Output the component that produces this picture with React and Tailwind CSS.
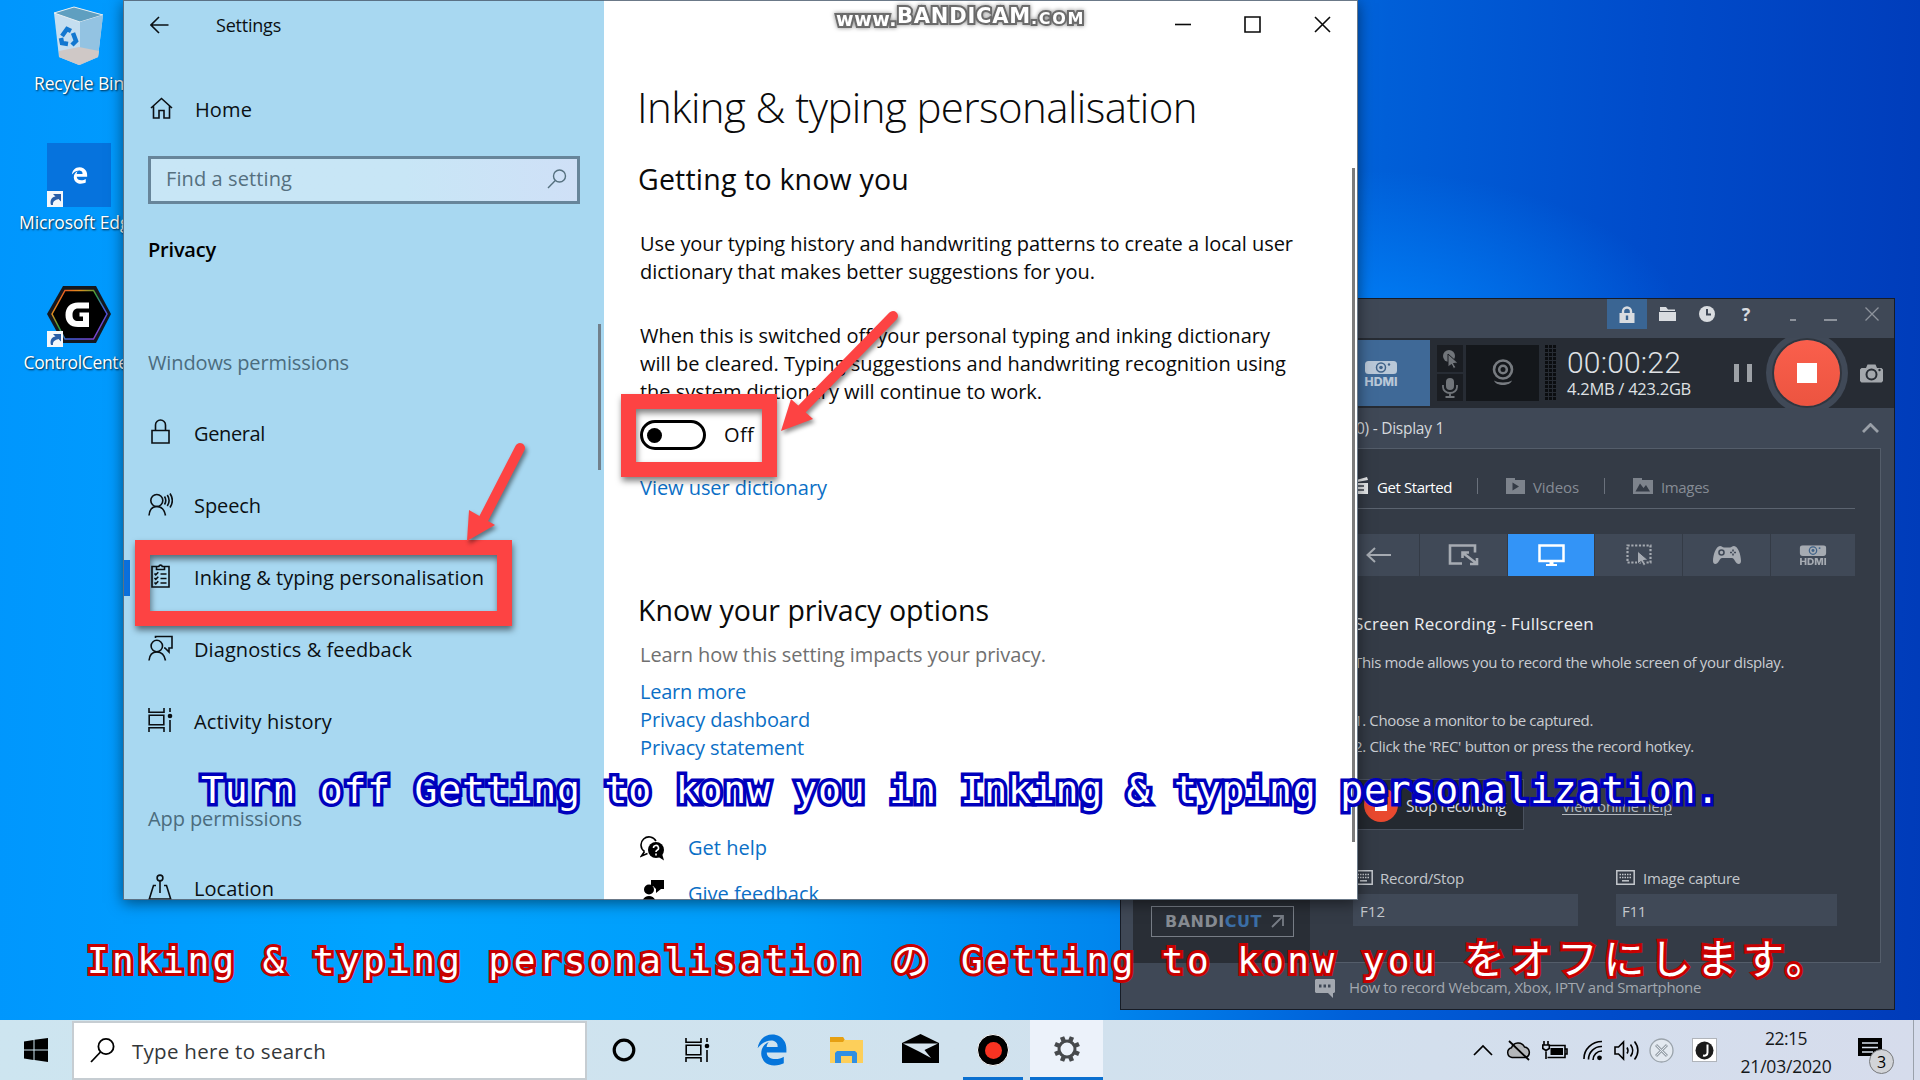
import React, { useLayoutEffect, useRef } from "react";
import { FaEdgeLegacy } from "react-icons/fa6";

/* Single line of text whose tracking is adjusted so that it spans w pixels. */
function Fit({ w, className = "", children }) {
  const ref = useRef(null);
  useLayoutEffect(() => {
    const el = ref.current;
    el.style.letterSpacing = "0px";
    const natural = el.getBoundingClientRect().width;
    el.style.letterSpacing = `${(w - natural) / el.textContent.length}px`;
  }, [w, children]);
  return (
    <span ref={ref} className={`inline-block shrink-0 self-auto whitespace-pre ${className}`}>
      {children}
    </span>
  );
}

function Svg({ w, h, className = "", sw = 1.6, children, vb }) {
  return (
    <svg
      width={w}
      height={h}
      viewBox={vb || `0 0 ${w} ${h}`}
      fill="none"
      stroke="currentColor"
      strokeWidth={sw}
      className={`shrink-0 ${className}`}
    >
      {children}
    </svg>
  );
}

const TaskViewShape = () => (
  <>
    <path d="M1 0v4.2h15V0M1 24v-4.2h15V24M1.2 7.2h14.6v9.6H1.2zM22 0v4M22 12v12" />
    <circle cx="22" cy="8" r="2.3" fill="currentColor" stroke="none" />
  </>
);

const icons = {
  general: (
    <Svg w={25} h={26}>
      <path d="M4 11.5h17v12.500H4zM7.500 11.500V6a5 5 0 0 1 10 0v5.500" />
    </Svg>
  ),
  speech: (
    <Svg w={25} h={25}>
      <circle cx="8.800" cy="8.500" r="6" />
      <path d="M1 23.500c.5-5.500 3.500-9 7.800-9s7.700 3.500 8.700 9M16.500 4.500c1.600 2.500 1.600 5.500 0 8M19.300 3c2.300 3.500 2.300 7.500 0 11M22 1.500c3 4.500 3 9.500 0 14" />
    </Svg>
  ),
  inking: (
    <Svg w={25} h={26}>
      <path d="M8.500 3.500H4V24h17V3.500h-4.500M8.500 6.500v-3h2.300a1.800 1.800 0 0 1 3.500 0h2.200v3zM12.500 11h6M12.500 15.500h6M12.500 20h6M6.500 10.500l1.300 1.300 2.500-2.500M6.500 15l1.300 1.300 2.500-2.500M6.500 19.500l1.300 1.300 2.500-2.500" />
    </Svg>
  ),
  diagnostics: (
    <Svg w={25} h={26}>
      <circle cx="8.800" cy="11" r="5.700" />
      <path d="M1 25.500c.5-5.500 3.500-8.500 7.800-8.500s7.700 3 8.700 8.500M7.500 3V1.500h16.500V13h-3v4l-4-4h-1" />
    </Svg>
  ),
  activity: (
    <Svg w={25} h={24}>
      <TaskViewShape />
    </Svg>
  ),
  location: (
    <Svg w={25} h={26}>
      <circle cx="12" cy="4" r="2.900" />
      <path d="M12 7v12M8 11.500H5.500L1.300 25h21.400L18.500 11.500H16" />
    </Svg>
  ),
};

function NavItem({ icon, label, w, selected }) {
  return (
    <div className="flex h-[72px] shrink-0 items-center">
      <span className={selected ? "h-9 w-1.5 bg-[#0a6fdc]" : "h-9 w-1.5"} />
      <span className="mb-1 ml-[18px] w-[25px]">{icons[icon]}</span>
      <Fit w={w} className="ml-[21px] text-[20px]">
        {label}
      </Fit>
    </div>
  );
}

function Sidebar() {
  return (
    <div className="flex h-full w-[481px] shrink-0 flex-col overflow-hidden bg-[#a8d8f1] pl-px text-[#0b1014]">
      <div className="flex h-[50px] shrink-0 items-center pl-[26px]">
        <Svg w={19} h={18}>
          <path d="M9 1L1 9l8 8M1 9h17.500" />
        </Svg>
        <Fit w={65} className="ml-[47px] text-[18px]">
          Settings
        </Fit>
      </div>
      <div className="mt-10 flex h-10 shrink-0 items-center pl-[26px]">
        <Svg w={23} h={22} className="mb-1">
          <path d="M1 11L11.500 1.500 22 11M3.500 9v12h5.500v-7.500h5V21h5.500V9" />
        </Svg>
        <Fit w={57} className="ml-[22px] text-[20px]">
          Home
        </Fit>
      </div>
      <div className="mt-[26px] ml-6 flex h-[48px] w-[432px] shrink-0 items-center justify-between border-3 border-[#67859a] bg-gradient-to-r from-[#c8e6f6] from-60% to-[#cfe0f7] pr-2.5 pb-[2px] pl-[15px] text-[#55707f]">
        <Fit w={126} className="text-[20px]">
          Find a setting
        </Fit>
        <Svg w={20} h={20} sw={1.4}>
          <circle cx="12.500" cy="7" r="6" />
          <path d="M8.300 11.500L1 19" />
        </Svg>
      </div>
      <div className="mt-[31px] flex h-[30px] shrink-0 items-center pl-6">
        <Fit w={68} className="text-[20px] font-semibold text-black">
          Privacy
        </Fit>
      </div>
      <div className="mt-[83px] flex h-[30px] shrink-0 items-center pl-6">
        <Fit w={201} className="text-[20px] text-[#4b6c7e]">
          Windows permissions
        </Fit>
      </div>
      <div className="mt-5 flex shrink-0 flex-col">
        <NavItem icon="general" label="General" w={71} />
        <NavItem icon="speech" label="Speech" w={67} />
        <NavItem icon="inking" label="Inking & typing personalisation" w={290} selected />
        <NavItem icon="diagnostics" label="Diagnostics & feedback" w={218} />
        <NavItem icon="activity" label="Activity history" w={138} />
      </div>
      <div className="mt-[46px] flex h-[30px] shrink-0 items-center pl-6">
        <Fit w={154} className="text-[20px] text-[#4b6c7e]">
          App permissions
        </Fit>
      </div>
      <div className="mt-[19px]">
        <NavItem icon="location" label="Location" w={80} />
      </div>
    </div>
  );
}

function Line({ w, className = "", children }) {
  return (
    <div className="flex h-7 shrink-0 items-center">
      <Fit w={w} className={`text-[20px] ${className}`}>
        {children}
      </Fit>
    </div>
  );
}

function SettingsContent() {
  return (
    <div className="flex h-full flex-1 flex-col overflow-hidden bg-white pl-9 text-[#0a0a0a]">
      <div className="flex h-[49px] shrink-0 items-center justify-end gap-[53px] pr-[27px]">
        <Svg w={16} h={17}>
          <path d="M0 8.500h16" />
        </Svg>
        <Svg w={17} h={17}>
          <path d="M1 1h15v15H1z" />
        </Svg>
        <Svg w={17} h={17}>
          <path d="M1 1l15 15M16 1L1 16" />
        </Svg>
      </div>
      <div className="mt-[27px] -ml-[3px] flex h-[60px] shrink-0 items-center">
        <Fit w={560} className="text-[42px] font-[350]">
          Inking & typing personalisation
        </Fit>
      </div>
      <div className="mt-[23px] -ml-0.5 flex h-10 shrink-0 items-center">
        <Fit w={271} className="text-[28.5px]">
          Getting to know you
        </Fit>
      </div>
      <div className="mt-[31px]">
        <Line w={653}>Use your typing history and handwriting patterns to create a local user</Line>
        <Line w={455}>dictionary that makes better suggestions for you.</Line>
      </div>
      <div className="mt-[36px]">
        <Line w={630}>When this is switched off your personal typing and inking dictionary</Line>
        <Line w={646}>will be cleared. Typing suggestions and handwriting recognition using</Line>
        <Line w={402}>the system dictionary will continue to work.</Line>
      </div>
      <div className="mt-[14px] flex h-[30px] shrink-0 items-center">
        <span className="flex h-[30px] w-[66px] items-center rounded-full border-3 border-black pl-1">
          <span className="size-[15px] rounded-full bg-black" />
        </span>
        <Fit w={30} className="ml-[18px] text-[20px]">
          Off
        </Fit>
      </div>
      <div className="mt-[24px] text-[#0b6fc6]">
        <Line w={187}>View user dictionary</Line>
      </div>
      <div className="mt-[88px] -ml-0.5 flex h-10 shrink-0 items-center">
        <Fit w={351} className="text-[28.5px]">
          Know your privacy options
        </Fit>
      </div>
      <div className="mt-[11px] text-[#707070]">
        <Line w={406}>Learn how this setting impacts your privacy.</Line>
      </div>
      <div className="mt-[9px] text-[#0b6fc6]">
        <Line w={106}>Learn more</Line>
        <Line w={170}>Privacy dashboard</Line>
        <Line w={164}>Privacy statement</Line>
      </div>
      <div className="mt-[72px] flex items-center gap-[23px] text-[#0b6fc6]">
        <Svg w={25} h={25} className="text-black">
          <path d="M4.500 15.500A8 8 0 1 1 16 5M4.500 15.500L1.500 20l6-2.500" />
          <circle cx="16" cy="14" r="8" fill="currentColor" stroke="none" />
          <path d="M17 20l7 4.500-2-7z" fill="currentColor" stroke="none" />
          <path d="M13.500 12a2.500 2.500 0 1 1 3.500 2.200c-.8.400-1 .8-1 1.800M16 17.500v2" stroke="#fff" />
        </Svg>
        <Line w={79}>Get help</Line>
      </div>
      <div className="mt-[18px] flex items-center gap-6 text-[#0b6fc6]">
        <Svg w={24} h={28} className="text-black">
          <circle cx="9" cy="9.500" r="5" fill="currentColor" stroke="none" />
          <path d="M2 24c0-5 3-8 7-8s7 3 7 8zM11 0h13v9h-3l-5 4V9l-3-3h-2z" fill="currentColor" stroke="none" />
        </Svg>
        <Line w={131}>Give feedback</Line>
      </div>
    </div>
  );
}

function SettingsWindow() {
  return (
    <div className="absolute top-0 left-[123px] h-[900px] w-[1235px] shadow-[0_3px_14px_rgba(0,0,0,0.5)]">
      <div className="flex h-full">
        <Sidebar />
        <SettingsContent />
      </div>
      <div className="absolute top-0 left-0 h-full w-full border border-[#46586a]/80" />
      <div className="absolute top-[324px] left-[475px] h-[146px] w-[3px] bg-[#71808c]" />
      <div className="absolute top-[168px] left-[1229px] h-[674px] w-[3px] bg-[#7c7c7c]" />
      <div className="absolute top-[3px] left-[713px] flex h-7 items-center font-['DejaVu_Sans',sans-serif] [paint-order:stroke_fill] [-webkit-text-stroke:4px_#6b6b6b] [filter:drop-shadow(0_0_2px_rgba(90,90,90,0.7))]">
        <Fit w={61} className="pt-1 text-[19px] font-bold text-white">
          www.
        </Fit>
        <Fit w={134} className="text-[21px] font-bold text-white">
          BANDICAM
        </Fit>
        <Fit w={54} className="pt-1 text-[16px] font-bold text-white">
          .COM
        </Fit>
      </div>
    </div>
  );
}

function HdmiIcon() {
  return (
    <Svg w={34} h={25}>
      <rect x="1" y="0" width="32" height="13" rx="3.500" fill="currentColor" stroke="none" />
      <circle cx="17" cy="6.500" r="4.500" stroke="#3f6288" strokeWidth="1.500" />
      <circle cx="17" cy="6.500" r="1.800" fill="#3f6288" stroke="none" />
      <circle cx="25" cy="3.500" r="1.200" fill="#3f6288" stroke="none" />
      <text x="0.500" y="24.500" textLength="33" lengthAdjust="spacingAndGlyphs" fill="currentColor" stroke="none" fontSize="11.500" fontWeight="800" fontFamily="Inter, sans-serif">
        HDMI
      </text>
    </Svg>
  );
}

function KeyboardIcon() {
  return (
    <Svg w={19} h={15} sw={1.5} className="text-[#c3c7cc]">
      <path d="M.8.800h17.400v13.400H.8z" />
      <path d="M3.500 4.500h12M3.500 7.500h12" strokeDasharray="1.500 1" />
      <path d="M6 10.800h7" />
    </Svg>
  );
}

function ModeCell({ active, className = "w-[87px]", children }) {
  return (
    <div
      className={`flex h-full items-center justify-center ${active ? "bg-[#3394f7] text-white" : "bg-[#404957] text-[#a6abb2]"} ${className}`}
    >
      {children}
    </div>
  );
}

function RecorderTitleBar() {
  return (
    <div className="flex h-[39px] shrink-0 items-start text-[#d9dce0]">
      <div className="ml-[486px] flex h-[30px] w-10 items-center justify-center bg-[#3a6593]">
        <Svg w={16} h={17} sw={2.4}>
          <path d="M4 8V5.500a4 4 0 0 1 8 0V8" />
          <path d="M.5 7h15v10H.5z" fill="currentColor" stroke="none" />
          <path d="M8 9.500v4.500" stroke="#3a6593" />
        </Svg>
      </div>
      <div className="flex h-[30px] w-10 items-center justify-center">
        <Svg w={17} h={14}>
          <path d="M1 0h6l2 2.500h7V4H1zM0 5h17v9H0z" fill="currentColor" stroke="none" />
        </Svg>
      </div>
      <div className="flex h-[30px] w-10 items-center justify-center">
        <Svg w={16} h={16} sw={2}>
          <circle cx="8" cy="8" r="8" fill="currentColor" stroke="none" />
          <path d="M8 3v5.500h4" stroke="#3f4856" />
        </Svg>
      </div>
      <div className="flex h-[30px] w-[38px] items-center justify-center text-[18px] font-bold">?</div>
      <div className="mt-5 ml-[25px] h-0.5 w-1.5 bg-[#8d939c]" />
      <div className="mt-[20px] ml-7 h-0.5 w-[13px] bg-[#8d939c]" />
      <Svg w={14} h={14} sw={1.300} className="mt-2 ml-7 text-[#8d939c]">
        <path d="M.5.500l13 13M13.500.500l-13 13" />
      </Svg>
    </div>
  );
}

function RecorderControls() {
  return (
    <div className="flex h-[70px] shrink-0 items-center overflow-hidden bg-[#272c34]">
      <div className="ml-[200px] flex h-[66px] w-[109px] items-center justify-end bg-[#3f6997] pr-[32px] text-[#b9c8d8]">
        <HdmiIcon />
      </div>
      <div className="ml-[7px] flex flex-col gap-0.5 text-[#71757a]">
        <div className="flex h-[27px] w-[26px] items-center justify-center bg-[#1a1d22]">
          <Svg w={18} h={20} sw={2}>
            <circle cx="8" cy="7" r="6" fill="currentColor" stroke="none" />
            <path d="M7 5l10 9-4.500.5 2.500 4-2.500 1-2-4L7 18z" fill="currentColor" stroke="#1a1d22" strokeWidth="1" />
          </Svg>
        </div>
        <div className="flex h-[27px] w-[26px] items-center justify-center bg-[#1a1d22]">
          <Svg w={16} h={20} sw={1.800}>
            <rect x="4" y="0" width="8" height="12" rx="4" fill="currentColor" stroke="none" />
            <path d="M1 7v2a7 6 0 0 0 14 0V7M8 15v4M3.500 19h9" />
          </Svg>
        </div>
      </div>
      <div className="ml-[3px] flex h-14 w-[73px] items-center justify-center bg-[#14171b] text-[#777b80]">
        <Svg w={22} h={28} sw={2.600}>
          <circle cx="11" cy="10.500" r="9" />
          <circle cx="11" cy="10.500" r="3.800" />
          <path d="M2 21.500c2 6 16 6 18 0-3 2.500-15 2.500-18 0z" fill="currentColor" stroke="none" />
        </Svg>
      </div>
      <Svg w={11} h={56} sw={2} className="ml-[6px] text-[#0b0d10]">
        <path d="M1.500 0v56M5.500 0v56M9.500 0v56" strokeWidth="3" strokeDasharray="3 1" />
      </Svg>
      <div className="ml-[11px] flex flex-col items-start pt-[3px] text-[#dfe1e4]">
        <Fit w={114} className="h-[26px] font-[Roboto,sans-serif] text-[30px] leading-[26px] font-light">
          00:00:22
        </Fit>
        <Fit w={124} className="mt-0.5 h-[22px] text-[16.5px] leading-[22px]">
          4.2MB / 423.2GB
        </Fit>
      </div>
      <div className="ml-[43px] flex gap-2">
        <span className="h-[18px] w-[5px] bg-[#9da1a6]" />
        <span className="h-[18px] w-[5px] bg-[#9da1a6]" />
      </div>
      <div className="ml-[14px] flex size-[82px] shrink-0 items-center justify-center rounded-full bg-[#404957]">
        <div className="flex size-[66px] items-center justify-center rounded-full bg-gradient-to-b from-[#fa5f4c] to-[#ec5440] shadow-[0_0_0_2px_#30363f]">
          <span className="size-5 bg-white" />
        </div>
      </div>
      <Svg w={23} h={19} className="ml-3 text-[#a3a7ac]">
        <path d="M1.500 4H6l1.500-3.500h8L17 4h4.500L23 5.500V17l-1.500 1.500h-20L0 17V5.500z" fill="currentColor" stroke="none" />
        <circle cx="11.500" cy="10.500" r="5" stroke="#272c34" strokeWidth="2" />
        <circle cx="19.500" cy="6" r="1.200" fill="#272c34" stroke="none" />
      </Svg>
    </div>
  );
}

function RecorderPanel() {
  return (
    <div className="flex h-[515px] w-[571px] shrink-0 flex-col border border-l-0 border-[#545d6a] bg-[#343b46]">
      <div className="mt-[29px] ml-[41px] flex h-4 items-center">
        <Svg w={17} h={18} className="text-[#e8eaec]">
          <path d="M0 6h17v11H0z" fill="currentColor" stroke="none" />
          <path d="M0 4.500L16 0l1 3L1 6z" fill="currentColor" stroke="none" />
          <path d="M5 9h8M5 13h8" stroke="#343b46" />
        </Svg>
        <Fit w={75} className="mt-[3px] ml-[9px] text-[15px] text-white">
          Get Started
        </Fit>
        <span className="ml-[25px] h-4 w-px bg-[#6a717c]" />
        <Svg w={19} h={16} className="ml-7 text-[#7d838c]">
          <path d="M0 0h9v2h10v14H0z" fill="currentColor" stroke="none" />
          <path d="M6.500 4.500l6.500 4-6.500 4z" fill="#343b46" stroke="none" />
        </Svg>
        <Fit w={46} className="mt-[3px] ml-[8px] text-[15px] text-[#868c95]">
          Videos
        </Fit>
        <span className="ml-[25px] h-4 w-px bg-[#6a717c]" />
        <Svg w={20} h={16} className="ml-7 text-[#7d838c]">
          <path d="M0 0h9v2h11v14H0z" fill="currentColor" stroke="none" />
          <path d="M2.500 13.500l4.500-8 3.500 4.500 2.500-3 4 6.500z" fill="#343b46" stroke="none" />
        </Svg>
        <Fit w={48} className="mt-[3px] ml-[8px] text-[15px] text-[#868c95]">
          Images
        </Fit>
      </div>
      <div className="mt-[14px] h-px w-[545px] bg-[#5b636f]" />
      <div className="mt-[25px] ml-[23px] flex h-[42px] gap-px">
        <ModeCell className="w-[86px]">
          <Svg w={25} h={16} sw={2} className="ml-1">
            <path d="M9 1L1.500 8 9 15M1.500 8H25" />
          </Svg>
        </ModeCell>
        <ModeCell>
          <Svg w={31} h={22} sw={2.600}>
            <path d="M27 8.500V1.500H2v18h12M15 9l13 10M14.500 14V8.500H21M29 14v6h-7" />
          </Svg>
        </ModeCell>
        <ModeCell active className="w-[86px]">
          <Svg w={27} h={22} sw={2.500}>
            <path d="M1.500 1.500h24v15.500h-24z" />
            <path d="M11.500 17h4v3h3.500v2H8v-2h3.500z" fill="currentColor" stroke="none" />
          </Svg>
        </ModeCell>
        <ModeCell>
          <Svg w={26} h={22} sw={2.200}>
            <path d="M1.500 1.500h23v17h-23z" strokeDasharray="2.200 1.600" />
            <path d="M11.500 7l10.500 9-4.500.5 2.500 4-2.500 1.200-2.300-4.200-3.700 2.500z" fill="currentColor" stroke="#404957" strokeWidth="1" />
          </Svg>
        </ModeCell>
        <ModeCell className="w-[87px]">
          <Svg w={28} h={18}>
            <path d="M7 0c2 0 2.500 1.500 4 1.500h6C18.500 1.500 19 0 21 0c4 0 7 9 7 15 0 4-4 4-6 0-1-2-2-3-3-3H9c-1 0-2 1-3 3-2 4-6 4-6 0C0 9 3 0 7 0z" fill="currentColor" stroke="none" />
            <circle cx="8.500" cy="6.500" r="2.500" stroke="#404957" />
            <path d="M20 3.500v6M17 6.500h6" stroke="#404957" strokeDasharray="2 2" />
          </Svg>
        </ModeCell>
        <ModeCell className="w-[84px]">
          <div className="flex scale-[0.82]">
            <HdmiIcon />
          </div>
        </ModeCell>
      </div>
      <div className="ml-[44px] flex flex-col items-start text-[#c9ccd1]">
        <Fit w={240} className="mt-[36px] h-6 text-[17px] leading-6 text-[#eceef0]">
          Screen Recording - Fullscreen
        </Fit>
        <Fit w={430} className="mt-[14px] h-6 text-[15px] leading-6">
          This mode allows you to record the whole screen of your display.
        </Fit>
        <Fit w={239} className="mt-[34px] h-6 text-[15px] leading-6">
          1. Choose a monitor to be captured.
        </Fit>
        <Fit w={340} className="mt-[2px] h-6 text-[15px] leading-6">
          2. Click the 'REC' button or press the record hotkey.
        </Fit>
      </div>
      <div className="mt-[21px] ml-[23px] flex h-[51px] items-center">
        <div className="flex h-full w-[191px] items-center border border-[#4a525f] bg-[#242930] pl-[30px]">
          <span className="flex size-[34px] items-center justify-center rounded-full bg-[#e9492f]">
            <span className="size-3 bg-white" />
          </span>
          <Fit w={100} className="mt-1 ml-2 text-[15.5px] text-[#d9dce0]">
            Stop recording
          </Fit>
        </div>
        <Fit w={110} className="mt-1 ml-[38px] text-[14.5px] text-[#b4b9c0] underline underline-offset-2">
          View online help
        </Fit>
      </div>
      <div className="mt-[30px] ml-[44px] flex text-[#c3c7cc]">
        <div className="flex w-[262px] flex-col">
          <div className="flex h-[34px] items-center">
            <KeyboardIcon />
            <Fit w={84} className="mt-[2px] ml-[7px] text-[15px]">
              Record/Stop
            </Fit>
          </div>
          <div className="-ml-px flex h-8 w-[225px] items-center bg-[#404957] pt-0.5 pl-[7px]">
            <Fit w={25} className="text-[15px]">
              F12
            </Fit>
          </div>
        </div>
        <div className="flex flex-col">
          <div className="flex h-[34px] items-center">
            <KeyboardIcon />
            <Fit w={97} className="mt-[2px] ml-[8px] text-[15px]">
              Image capture
            </Fit>
          </div>
          <div className="flex h-8 w-[221px] items-center bg-[#404957] pt-0.5 pl-[6px]">
            <Fit w={24} className="text-[15px]">
              F11
            </Fit>
          </div>
        </div>
      </div>
    </div>
  );
}

function RecorderWindow() {
  return (
    <div className="absolute top-[298px] left-[1120px] flex h-[712px] w-[775px] flex-col overflow-hidden border border-[#171c26] bg-[#3f4856]">
      <RecorderTitleBar />
      <RecorderControls />
      <div className="flex h-10 shrink-0 items-center justify-between pr-[15px] pl-[235px]">
        <Fit w={88} className="mt-0.5 text-[15.5px] text-[#d5d8dc]">
          0) - Display 1
        </Fit>
        <Svg w={17} h={10} sw={2.800} className="text-[#9aa0a8]">
          <path d="M1 9l7.500-7.500L16 9" />
        </Svg>
      </div>
      <div className="flex pl-3">
        <div className="flex h-[515px] w-[177px] shrink-0 flex-col justify-end bg-[#292e36] pb-[26px] pl-[18px]">
          <div className="flex h-[31px] w-[143px] items-center justify-between border border-[#777d86] pr-2 pl-[13px] font-['DejaVu_Sans',sans-serif] text-[16px] font-bold">
            <Fit w={97} className="text-[#868b92]">
              BANDI<span className="text-[#3b6ea6]">CUT</span>
            </Fit>
            <Svg w={13} h={13} sw={1.800} className="mr-px text-[#777d86]">
              <path d="M1 12L12 1M2 1h10v10" />
            </Svg>
          </div>
        </div>
        <RecorderPanel />
      </div>
      <div className="flex flex-1 items-center pl-[194px] text-[#a3a8b0]">
        <Svg w={20} h={19} className="mt-1">
          <path d="M1 0h18l1 1v12l-1 1h-1v5l-5-5H1l-1-1V1z" fill="currentColor" stroke="none" />
          <path d="M4 7h12" stroke="#3f4856" strokeWidth="3" strokeDasharray="2.500 2" />
        </Svg>
        <Fit w={352} className="mt-[3px] ml-[14px] text-[15px]">
          How to record Webcam, Xbox, IPTV and Smartphone
        </Fit>
      </div>
    </div>
  );
}

function Shortcut() {
  return (
    <Svg w={16} h={16} className="absolute bottom-0 left-0">
      <rect width="16" height="16" fill="#f4f7fb" stroke="none" />
      <path d="M4 14c-1.500-5 1-8 4.500-8.500L6 3h8v7.500L11.500 8C8 9 5.500 10.500 6 14z" fill="#2a5ea8" stroke="none" />
    </Svg>
  );
}

function DesktopIcons() {
  const label = "text-[17.5px] leading-6 text-white [text-shadow:1px_1px_2px_rgba(0,0,0,0.8)]";
  return (
    <div className="absolute top-0 left-0 flex w-[158px] flex-col items-center">
      <div className="flex h-[140px] shrink-0 flex-col items-center pt-[6px]">
        <Svg w={52} h={60}>
          <path d="M1 7l20-6 29 8-5 42-19 8-20-8z" fill="#c5def0" stroke="none" />
          <path d="M1 7l20-6 29 8-23 7z" fill="#5f9fc0" stroke="#e6eef2" strokeWidth="1" />
          <path d="M27 16l23-7-5 42-18 8z" fill="#93c3e2" stroke="none" />
          <path d="M6 45l20-4 20 4-1 6-19 8-20-8z" fill="#cfc8c6" stroke="none" />
          <path d="M9 30l5-7 4 2M20 27l3 8-4 4M15 38l-6-1-1-5" stroke="#1277d0" strokeWidth="4.500" />
        </Svg>
        <Fit w={90} className={`mt-[5px] ${label}`}>
          Recycle Bin
        </Fit>
      </div>
      <div className="flex h-[140px] shrink-0 flex-col items-center pt-[3px]">
        <div className="relative flex h-16 w-16 items-center justify-center bg-[#0673dd] text-white">
          <FaEdgeLegacy size={17} />
          <Shortcut />
        </div>
        <Fit w={120} className={`mt-[3px] ${label}`}>
          Microsoft Edge
        </Fit>
      </div>
      <div className="flex h-[140px] shrink-0 flex-col items-center pt-[6px]">
        <div className="relative h-[61px] w-16">
          <svg width="64" height="58" viewBox="0 0 64 58">
            <defs>
              <linearGradient id="rgb-ring" x1="0" y1="0" x2="1" y2="1">
                <stop offset="0" stopColor="#f03020" />
                <stop offset="0.250" stopColor="#e09020" />
                <stop offset="0.450" stopColor="#30a040" />
                <stop offset="0.650" stopColor="#4060e0" />
                <stop offset="1" stopColor="#a030c0" />
              </linearGradient>
            </defs>
            <path d="M16 0h33l15 28-15 29H16L0 28z" fill="#15181f" />
            <path d="M18 4.500h28.500L60 28 46.500 53H18L5 28z" fill="#000" stroke="url(#rgb-ring)" strokeWidth="1.500" />
            <path d="M42 16.500H31c-8 0-12.500 5-12.500 12.500S23 41 31 41h11V26.500h-9.500v4H36V35h-5c-3.500 0-5.500-2-5.500-6s2-6.500 5.500-6.500h11z" fill="#fff" />
          </svg>
          <Shortcut />
        </div>
        <Fit w={111} className={`mt-[3px] ${label}`}>
          ControlCenter
        </Fit>
      </div>
    </div>
  );
}

function Annotations() {
  return (
    <>
      <div className="absolute top-[540px] left-[135px] h-[86px] w-[377px] border-15 border-[#fd4343] drop-shadow-[1px_4px_3px_rgba(0,0,0,0.5)]" />
      <div className="absolute top-[394px] left-[621px] h-[83px] w-[156px] border-15 border-[#fd4343] drop-shadow-[1px_4px_3px_rgba(0,0,0,0.5)]" />
      <svg
        width="460"
        height="250"
        viewBox="455 300 460 250"
        className="absolute top-[300px] left-[455px] drop-shadow-[2px_3px_2px_rgba(0,0,0,0.45)]"
      >
        <path d="M520 448L483 520" stroke="#fd4343" strokeWidth="10" strokeLinecap="round" />
        <path d="M467 541L469 510L495 525Z" fill="#fd4343" />
        <path d="M893 316L800 411" stroke="#fd4343" strokeWidth="10" strokeLinecap="round" />
        <path d="M781 431L791 399L813 419Z" fill="#fd4343" />
      </svg>
    </>
  );
}

function Subtitles() {
  return (
    <>
      <div className="absolute top-[760px] left-[201px] flex h-[60px] items-center font-['DejaVu_Sans_Mono',monospace] text-[38px] text-white [paint-order:stroke_fill] [-webkit-text-stroke:7px_#0000bd]">
        <Fit w={1519}>Turn off Getting to konw you in Inking & typing personalization.</Fit>
      </div>
      <div className="absolute top-[931px] left-[87px] flex h-[60px] items-center font-['DejaVu_Sans_Mono','Noto_Sans_CJK_JP',monospace] text-[36px] text-white [paint-order:stroke_fill] [-webkit-text-stroke:6px_#c80000]">
        <Fit w={778}>Inking & typing personalisation</Fit>
        <Fit w={46} className="ml-[26px] text-[38px]">
          の
        </Fit>
        <Fit w={477} className="ml-[24px]">
          Getting to konw you
        </Fit>
        <Fit w={368} className="ml-[26px] text-[41px]">
          をオフにします。
        </Fit>
      </div>
    </>
  );
}

function Taskbar() {
  return (
    <div className="absolute bottom-0 left-0 flex h-[60px] w-full items-center bg-gradient-to-r from-[#cde5f0] via-[#d0e2ee] to-[#d6dcec] text-black">
      <div className="flex w-[72px] justify-center">
        <Svg w={24} h={24}>
          <path d="M0 3.500l9.500-1.500v9.500H0zM10.500 1.800L24 0v11.500H10.500zM0 12.500h9.500V22L0 20.500zM10.500 12.500H24V24l-13.500-2z" fill="currentColor" stroke="none" />
        </Svg>
      </div>
      <div className="flex h-[59px] w-[515px] items-center border-2 border-[#c6cdd2] bg-white pl-4">
        <Svg w={25} h={25} sw={1.800}>
          <circle cx="16" cy="8.500" r="7.600" />
          <path d="M10.500 14L1 24" />
        </Svg>
        <Fit w={194} className="mt-[3px] ml-[17px] text-[20.5px] text-[#33373a]">
          Type here to search
        </Fit>
      </div>
      <div className="flex w-[74px] justify-center">
        <Svg w={26} h={26} sw={3.200}>
          <circle cx="13" cy="13" r="9.800" />
        </Svg>
      </div>
      <div className="flex w-[72px] justify-center">
        <Svg w={25} h={24}>
          <TaskViewShape />
        </Svg>
      </div>
      <div className="flex w-[78px] justify-center">
        <FaEdgeLegacy size={32} color="#0575db" />
      </div>
      <div className="flex w-[70px] justify-center">
        <Svg w={33} h={27}>
          <path d="M0 0h13l2 3h18v23H0z" fill="#fdcf5a" stroke="none" />
          <path d="M0 0h13l1.500 2.500L13 5H0z" fill="#e6a012" stroke="none" />
          <path d="M5 26V16l2-2h18l2 2v10h-5v-7H11v7z" fill="#2f8fe3" stroke="none" />
        </Svg>
      </div>
      <div className="flex w-[78px] justify-center">
        <Svg w={37} h={29} className="mb-1">
          <path d="M0 9L18.500 0 37 9v20H0z" fill="currentColor" stroke="none" />
          <path d="M1 9.500h35L22.500 16l6.500 8-12-6.500z" fill="#d6e5ef" stroke="none" />
        </Svg>
      </div>
      <div className="ml-1 flex h-full w-[60px] flex-col items-center justify-between border-b-3 border-[#0b70d0] pt-3.5 pb-2.5">
        <div className="flex size-8 items-center justify-center rounded-full border border-white bg-black">
          <span className="size-[17px] rounded-full bg-[#f83322]" />
        </div>
      </div>
      <div className="ml-[7px] flex h-full w-[73px] items-center justify-center border-b-3 border-[#0b70d0] bg-[#ecf2fa] text-[#46494c]">
        <Svg w={28} h={28} sw={3} vb="-14 -14 28 28">
          <circle r="8" />
          {[22.5, 67.5, 112.5, 157.5, 202.5, 247.5, 292.5, 337.5].map((a) => (
            <path key={a} d="M0 -8.500V-13" strokeWidth="4.500" transform={`rotate(${a})`} />
          ))}
        </Svg>
      </div>
      <div className="ml-[370px] flex items-center">
        <Svg w={20} h={12} sw={1.700}>
          <path d="M1 11l9-9 9 9" />
        </Svg>
        <Svg w={26} h={21} sw={1.500} className="ml-[13px]">
          <path d="M6 17.500a5 5 0 0 1-.5-9.800A7 7 0 0 1 18.500 7a5.500 5.500 0 0 1 1.500 10.500z" fill="#b3b6b9" />
          <path d="M3 1l20 19" strokeWidth="1.800" />
        </Svg>
        <Svg w={26} h={19} sw={1.600} className="ml-[10px]">
          <path d="M8 4.500h15v12H5.500M23 8h2v5h-2M2 0v4M6 0v4M.8 4h6.500v3.500L4 9.500.8 7.500zM4 9.500V18" />
          <path d="M8.500 7h12.500v7H8.500z" fill="currentColor" stroke="none" />
        </Svg>
        <Svg w={20} h={21} sw={1.600} className="ml-[15px]">
          <path d="M1 19A18 17 0 0 1 19 1.500M5.500 19.500A13 13 0 0 1 19 6.500M10 20a9 9 0 0 1 9-9" />
          <circle cx="16.500" cy="17.800" r="2.400" fill="currentColor" stroke="none" />
        </Svg>
        <Svg w={26} h={21} sw={1.600} className="ml-[11px]">
          <path d="M1 7h3.500L9.500 2v17l-5-5H1zM13 7.500c1.300 2 1.300 4 0 6M16.500 4.500c3 4 3 8 0 12M20.500 1.500c4.500 5.500 4.500 12.500 0 18" />
        </Svg>
        <Svg w={25} h={25} sw={1.300} className="ml-[9px] text-[#9aa3ab]">
          <circle cx="12.500" cy="12.500" r="11.500" fill="#e3e9f0" />
          <path d="M7 7l11 11M18 7L7 18" strokeWidth="3" />
          <path d="M7.500 7.500l10 10M17.500 7.500l-10 10" stroke="#e3e9f0" strokeWidth="1" />
        </Svg>
        <div className="ml-[18px] flex h-6 w-[25px] items-center justify-center border border-[#b0b4ba] bg-white">
          <Svg w={19} h={19}>
            <circle cx="9.500" cy="9.500" r="9" fill="#1b1b1b" stroke="none" />
            <path d="M12.500 3.500v8c0 2.500-2 3.500-4.500 3" stroke="#fff" strokeWidth="2" />
          </Svg>
        </div>
      </div>
      <div className="ml-[23px] flex w-[92px] flex-col items-center pt-[3px] text-[17.5px] text-[#15181a]">
        <Fit w={42} className="h-7 leading-7">
          22:15
        </Fit>
        <Fit w={91} className="h-7 leading-7">
          21/03/2020
        </Fit>
      </div>
      <div className="relative ml-[26px] h-[34px] w-[36px]">
        <Svg w={25} h={24} className="mt-[5px]">
          <path d="M0 0h24v18h-5v5l-6-5H0z" fill="currentColor" stroke="none" />
          <path d="M4 5h16M4 9.500h16M4 14h11" stroke="#d6dfec" strokeWidth="1.500" />
        </Svg>
        <div className="absolute right-0 -bottom-[7px] flex size-[25px] items-center justify-center rounded-full border border-[#77797c] bg-[#d2d4d8] text-[16px]">
          3
        </div>
      </div>
      <div className="ml-auto h-full w-[7px] border-l border-[#9aa1ab]" />
    </div>
  );
}

export default function App() {
  return (
    <div className="relative h-[1080px] w-[1920px] overflow-hidden bg-[radial-gradient(ellipse_330px_170px_at_1360px_340px,rgba(0,135,255,0.85),rgba(0,110,255,0)),linear-gradient(92deg,#0096fd_0%,#00a4ff_22%,#009dfb_42%,#0086ee_58%,#005fd8_71%,#004ccb_84%,#003bb9_100%)] font-['Open_Sans','Noto_Sans',sans-serif]">
      <DesktopIcons />
      <RecorderWindow />
      <SettingsWindow />
      <Annotations />
      <Subtitles />
      <Taskbar />
    </div>
  );
}
